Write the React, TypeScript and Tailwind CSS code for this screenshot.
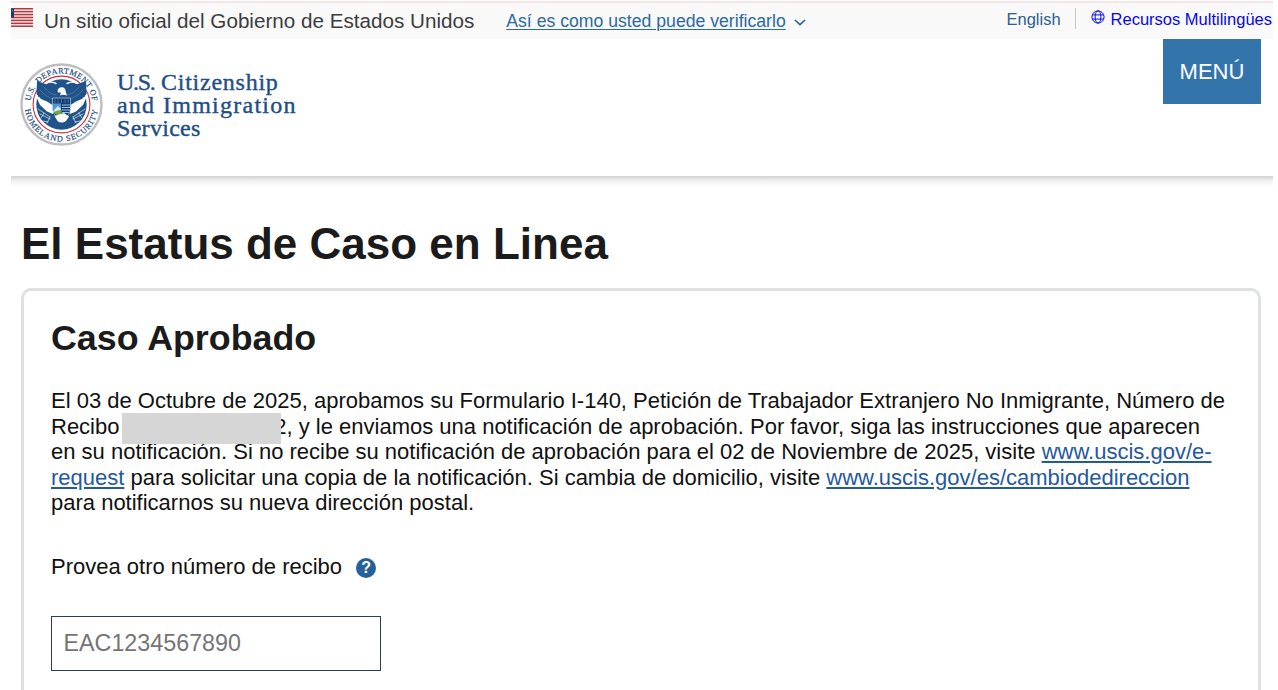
const NAVY = "#1f4e86";

function Flag() {
  return (
    <svg className="block h-[19px] w-[22px] shrink-0" viewBox="0 0 22 19" aria-hidden="true">
      <rect width="22" height="19" fill="#f3e4e6" />
      {[0, 1, 2, 3, 4, 5, 6].map((i) => (
        <rect key={i} y={i * 2.92} width="22" height="1.46" fill="#b0383e" />
      ))}
      <rect width="3" height="9" y="0.6" fill="#26376f" />
      <rect x="0.8" y="2.2" width="1" height="1" fill="#9aa5c8" />
    </svg>
  );
}

function Globe() {
  return (
    <svg className="block h-[14px] w-[14px] shrink-0" viewBox="0 0 14 14" fill="none" stroke="#0b0be6" strokeWidth="1" aria-hidden="true">
      <circle cx="7" cy="7" r="6.1" />
      <ellipse cx="7" cy="7" rx="2.9" ry="6.1" />
      <path d="M1.4 4.9h11.2M1.4 9.1h11.2" />
    </svg>
  );
}

function Seal() {
  return (
    <svg className="block h-[83px] w-[83px] shrink-0" viewBox="0 0 83 83" aria-hidden="true">
      <defs>
        <path id="ringTop" d="M10.5 41.5A31 31 0 0 1 72.5 41.5" />
        <path id="ringBottom" d="M4.900 44.500A36.700 36.700 0 0 0 78.100 44.500" />
      </defs>
      <circle cx="41.5" cy="41.5" r="40" fill="#fff" stroke="#bdbec0" strokeWidth="2.4" />
      <circle cx="41.5" cy="41.5" r="28.400" fill="none" stroke="#c9303b" strokeWidth="1.1" />
      <circle cx="41.5" cy="41.5" r="25.200" fill="#21538b" />
      <path d="M16 33L20 42 27 48.500 33 51V42L24 35zM67 33L63 42 56 48.500 50 51V42L59 35z" fill="#fff" />
      <path d="M16.500 31L17 18 24 20.500 31 22.500 41.500 22 52 22.500 59 20.500 66 18 66.500 31 62 36 56 38.500 50.500 42H32.500L27 38.500 21 36z" fill="#21538b" />
      <g fill="none" stroke="#fff" strokeLinecap="round">
        <path d="M20 27Q27 35 34 36M24 24Q29 31 36 32M63 27Q56 35 49 36M59 24Q54 31 47 32" strokeWidth="0.5" opacity="0.35" />
        <path d="M18 46l12 8M20 51l10 5M24 50l-3 5M28 59l-5-1M30 54l-3 6" strokeWidth="1" opacity="0.6" />
        <path d="M65 46l-12 8M63 51l-10 5M59 50l3 5M55 59l5-1M53 54l3 6" strokeWidth="1" opacity="0.6" />
        <path d="M27 19.500Q32 18.500 36 20.500M56 19.500Q51 18.500 47 20.500" strokeWidth="1.4" />
      </g>
      <path d="M37.500 28Q38 24.500 41.800 24.300Q45.500 24.500 45.800 29L47 32.500Q43 31 40 32.500L41 29.500 38 29.500z" fill="#fff" />
      <path d="M32.500 35H50.500V47Q49 54 41.500 57Q34 54 32.500 47z" fill="#173f74" stroke="#fff" strokeWidth="0.5" />
      <path d="M33 40.500H41V47H33z" fill="#4c98d0" />
      <path d="M33 48L38 43 41 46V50H33z" fill="#d7e7f2" />
      <path d="M33 49L41.500 46.500V52.500L36 51.500z" fill="#6aac45" />
      <path d="M42 42h8M42 44.500h8M42 47h8M42 49.500h7" stroke="#9cc4e6" strokeWidth="1" />
      <path d="M35 36v4M38 36v4M41.500 36v4M45 36v4M48 36v4" stroke="#6387b4" strokeWidth="0.6" />
      <path d="M34.500 53L39 51.500 44 50 49 53.500 46 58Q41.500 61 37.500 58z" fill="#fff" />
      <g fill={NAVY} stroke={NAVY} strokeWidth="0.2" fontFamily="'Liberation Serif', serif">
        <text fontSize="8.200">
          <textPath href="#ringTop" startOffset="3.500" textLength="14.500">U.S.</textPath>
        </text>
        <text fontSize="8.200">
          <textPath href="#ringTop" startOffset="23" textLength="71">DEPARTMENT OF</textPath>
        </text>
        <text fontSize="8.200">
          <textPath href="#ringBottom" startOffset="2" textLength="105">HOMELAND SECURITY</textPath>
        </text>
      </g>
    </svg>
  );
}

function TopBar() {
  return (
    <div className="flex h-[39px] shrink-0 items-start border-t border-white bg-[#f9f9f9]">
      <div className="flex h-full w-full items-start border-t-2 border-[#f8e3e5]">
        <div className="pt-[5px]">
          <Flag />
        </div>
        <span className="ml-[11px] mt-[6px] whitespace-nowrap text-[20.650px] leading-[24px] text-[#3d3d3f]">
          Un sitio oficial del Gobierno de Estados Unidos
        </span>
        <a className="ml-[32px] mt-[6px] whitespace-nowrap text-[17.650px] leading-[24px] text-[#2c6aa3] underline decoration-1 underline-offset-[2px]">
          Así es como usted puede verificarlo
        </a>
        <svg className="ml-[8px] mt-[16px] h-[7px] w-[12px] shrink-0" viewBox="0 0 12 7" fill="none" stroke="#2c5f99" strokeWidth="1.6" aria-hidden="true">
          <path d="M1 1l5 4.700L11 1" />
        </svg>
        <div className="ml-auto flex items-start">
          <a className="mt-[4px] whitespace-nowrap text-[16.500px] leading-[24px] text-[#2b6090]">English</a>
          <span className="ml-[14px] mt-[5px] h-[21px] w-px bg-[#c9c9c9]" />
          <div className="ml-[15px] mt-[7px]">
            <Globe />
          </div>
          <a className="ml-[6px] mr-[1px] mt-[4px] whitespace-nowrap text-[16.500px] leading-[24px] text-[#0707ec]">
            Recursos Multilingües
          </a>
        </div>
      </div>
    </div>
  );
}

function Header() {
  return (
    <header className="flex h-[137px] shrink-0 items-start justify-between pl-[9px] pr-[12px]">
      <div className="flex items-start pt-[24px]">
        <Seal />
        <div className="ml-[14px] mt-[8px] whitespace-nowrap font-['Liberation_Serif',serif] text-[24px] leading-[23px] text-[#1f4e86] [-webkit-text-stroke:0.4px_#1f4e86]">
          <div className="flex gap-[6px]">
            <span className="w-[38px] tracking-[-1.300px]">U.S.</span>
            <span className="tracking-[0.750px]">Citizenship</span>
          </div>
          <div className="flex gap-[6px]">
            <span className="w-[40px] tracking-[1.200px]">and</span>
            <span className="tracking-[1.250px]">Immigration</span>
          </div>
          <div className="tracking-[0.300px]">Services</div>
        </div>
      </div>
      <button className="h-[65px] w-[98px] bg-[#3375ab] text-[22px] leading-[65px] text-white">MENÚ</button>
    </header>
  );
}

function StatusCard() {
  return (
    <section className="mt-[19px] h-[420px] rounded-[10px] border-[3px] border-[#dfe1e2] pl-[27px]">
      <h2 className="mt-[26px] whitespace-nowrap text-[35.800px] font-bold leading-[43px] text-[#1b1b1b]">Caso Aprobado</h2>
      <div className="mt-[28px] whitespace-nowrap text-[22px] leading-[25.500px] text-[#111]">
        <div>El 03 de Octubre de 2025, aprobamos su Formulario I-140, Petición de Trabajador Extranjero No Inmigrante, Número de</div>
        <div className="flex">
          <span>Recibo</span>
          <span className="relative ml-[3px] flex w-[164px] justify-end">
            2
            <span className="absolute left-0 top-[-1px] h-[31px] w-[159px] bg-[#d6d6d6]" />
          </span>
          <span>, y le enviamos una notificación de aprobación. Por favor, siga las instrucciones que aparecen</span>
        </div>
        <div>
          en su notificación. Si no recibe su notificación de aprobación para el 02 de Noviembre de 2025, visite{" "}
          <a className="text-[#2459a0] underline">www.uscis.gov/e-</a>
        </div>
        <div>
          <a className="text-[#2459a0] underline">request</a> para solicitar una copia de la notificación. Si cambia de domicilio, visite{" "}
          <a className="text-[#2459a0] underline">www.uscis.gov/es/cambiodedireccion</a>
        </div>
        <div>para notificarnos su nueva dirección postal.</div>
      </div>
      <div className="mt-[38px] flex items-center">
        <label htmlFor="receipt" className="whitespace-nowrap text-[22px] leading-[26px] text-[#111]">
          Provea otro número de recibo
        </label>
        <span className="ml-[14px] mt-[2px] flex h-[20px] w-[20px] items-center justify-center rounded-full bg-[#27619a] text-[16px] font-bold leading-[20px] text-white">
          ?
        </span>
      </div>
      <input
        id="receipt"
        placeholder="EAC1234567890"
        className="mt-[36px] block h-[55px] w-[330px] rounded-none border border-[#2d3e50] px-[11.500px] text-[23.300px] leading-[30px] placeholder:text-[#757575]"
      />
    </section>
  );
}

export default function App() {
  return (
    <div className="flex h-[690px] w-[1278px] flex-col overflow-hidden bg-white pl-[11px] pr-[5px] font-['Liberation_Sans',Arial,sans-serif]">
      <TopBar />
      <Header />
      <div className="h-[11px] shrink-0 bg-linear-to-b from-[#d2d2d2] via-[#f1f1f1] via-45% to-white" />
      <main className="pl-[10px] pr-[12px]">
        <h1 className="mt-[32px] whitespace-nowrap text-[44px] font-bold leading-[50px] text-[#1b1b1b]">
          El Estatus de Caso en Linea
        </h1>
        <StatusCard />
      </main>
    </div>
  );
}
